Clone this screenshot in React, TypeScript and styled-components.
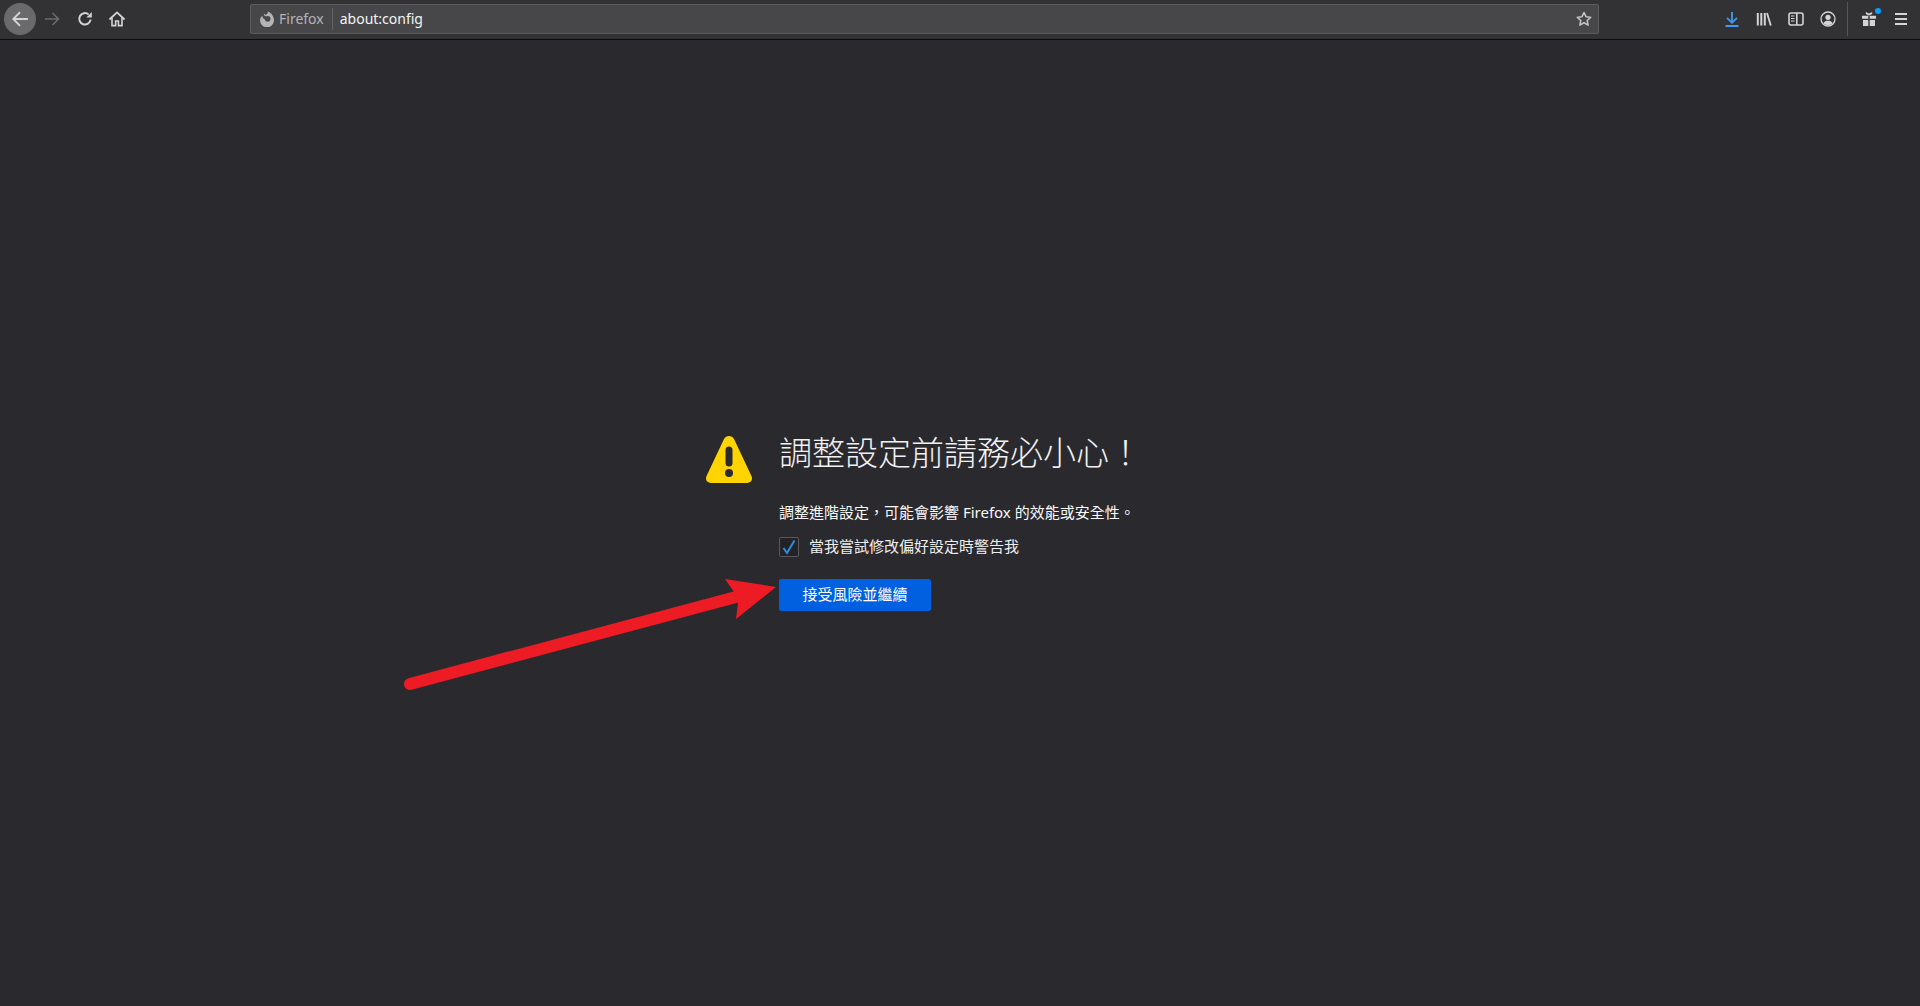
import styled, { createGlobalStyle } from "styled-components";

const GlobalStyle = createGlobalStyle`
  html, body {
    margin: 0;
    height: 100%;
    overflow: hidden;
    background: #2a2a2e;
  }
  #root {
    height: 100%;
  }
`;

// Styled
const Page = styled.div`
  position: relative;
  display: flex;
  flex-direction: column;
  height: 1006px;
  background: #2a2a2e;
  color: #f9f9fa;
  font-family: "Noto Sans", "Noto Sans CJK TC", sans-serif;
`;

const Toolbar = styled.header`
  display: flex;
  align-items: center;
  flex: none;
  box-sizing: border-box;
  height: 40px;
  padding-bottom: 1px;
  background: #323234;
  border-bottom: 1px solid #0c0c0d;
`;

const NavGroup = styled.nav`
  display: flex;
  align-items: center;
  flex: none;
  box-sizing: border-box;
  width: 250px;
  padding-left: 4px;
`;

const ToolButton = styled.button<{ $active?: boolean; $dim?: boolean; $shift?: number }>`
  display: flex;
  align-items: center;
  justify-content: center;
  flex: none;
  width: 32px;
  height: 32px;
  margin-left: ${(p) => p.$shift ?? 0}px;
  padding: 0;
  border: 0;
  border-radius: 50%;
  background: ${(p) => (p.$active ? "#6a6a6c" : "transparent")};
  color: ${(p) => (p.$dim ? "#6b6b6d" : "#d4d4d5")};
`;

const UrlBar = styled.div`
  display: flex;
  align-items: center;
  flex: 1;
  box-sizing: border-box;
  height: 30px;
  padding: 0 6px 0 8px;
  background: #474749;
  border: 1px solid #5c5c5e;
  border-radius: 2px;
  font-size: 14px;
  line-height: 18px;
`;

const Identity = styled.span`
  display: flex;
  align-items: center;
  gap: 4px;
  height: 22px;
  padding-right: 8px;
  border-right: 1px solid #636366;
  color: #b4b4b5;
`;

const UrlText = styled.span`
  flex: 1;
  padding-bottom: 1px;
  padding-left: 7px;
  color: #f4f4f5;
`;

const ActionGroup = styled.div`
  display: flex;
  align-items: center;
  justify-content: flex-end;
  flex: none;
  box-sizing: border-box;
  width: 321px;
  padding-right: 3px;
`;

const Separator = styled.span`
  flex: none;
  width: 1px;
  height: 34px;
  margin: 0 5px 0 3px;
  background: #555557;
`;

const BadgeWrap = styled.span`
  position: relative;
  display: flex;
`;

const Badge = styled.span`
  position: absolute;
  top: -3px;
  right: -4px;
  width: 6px;
  height: 6px;
  border-radius: 50%;
  background: #0a9dff;
`;

const Main = styled.main`
  display: flex;
  flex: 1;
  align-items: center;
  justify-content: center;
`;

const Notice = styled.section`
  display: flex;
  gap: 27px;
  width: 508px;
`;

const WarningIcon = styled.svg`
  flex: none;
  width: 46px;
  height: 47px;
`;

const NoticeBody = styled.div`
  flex: 1;
`;

const Title = styled.h1`
  margin: 0 0 32px;
  font-size: 33px;
  font-weight: 300;
  line-height: 34px;
  white-space: nowrap;
  color: #f1f1f2;
`;

const Message = styled.p`
  margin: 0 0 15px;
  font-size: 15px;
  line-height: 20px;
  white-space: nowrap;
`;

const CheckRow = styled.label`
  display: flex;
  align-items: center;
  gap: 10px;
  font-size: 15px;
  line-height: 20px;
  color: #eeeeef;
`;

const CheckText = styled.span`
  height: 20px;
  margin-top: -2px;
`;

const CheckBox = styled.span`
  display: flex;
  align-items: center;
  justify-content: center;
  box-sizing: border-box;
  width: 20px;
  height: 20px;
  background: #232327;
  border: 1px solid #5a5a5e;
  border-radius: 2px;
  color: #2b90d9;
`;

const AcceptButton = styled.button`
  display: block;
  width: 152px;
  height: 32px;
  margin-top: 22px;
  padding: 0 0 2px;
  border: 0;
  border-radius: 2px;
  background: #0060df;
  color: #ffffff;
  font: inherit;
  font-size: 15px;
`;

const Annotation = styled.svg`
  position: absolute;
  top: 570px;
  left: 400px;
  width: 390px;
  height: 125px;
  pointer-events: none;
`;

// Icons
const Glyph = styled.svg`
  display: block;
  width: 16px;
  height: 16px;
  fill: none;
  stroke: currentColor;
  stroke-width: 1.6;
`;

const BackIcon = () => (
  <Glyph viewBox="0 0 16 16" style={{ width: 18, height: 18 }}>
    <path d="M15 8H2M8 2 2 8l6 6" />
  </Glyph>
);

const ForwardIcon = () => (
  <Glyph viewBox="0 0 16 16">
    <path d="M1 8h13M8.5 2 14.5 8l-6 6" />
  </Glyph>
);

const ReloadIcon = () => (
  <Glyph viewBox="0 0 16 16">
    <path d="M13.6 8.6A5.7 5.7 0 1 1 11.6 3.4" strokeWidth="2" />
    <path d="M14.8 1v5.4H9.4z" fill="currentColor" stroke="none" />
  </Glyph>
);

const HomeIcon = () => (
  <Glyph viewBox="0 0 16 16">
    <path d="M1 8 8 1.4 15 8" strokeLinecap="round" strokeWidth="1.8" />
    <path d="M3 7v7.6h3.6V10h2.8v4.6H13V7" />
  </Glyph>
);

const FirefoxIcon = () => (
  <svg viewBox="0 0 16 16" width="16" height="16" aria-hidden="true">
    <path
      fill="#b4b4b5"
      d="M8.800.4c.3 1.800-.6 2.900-2 3.500-.6-.5-1.300-.8-2-.9.2.5.3 1 .3 1.500.9.300 1.500.6 2 1.100.4-.4 1-.6 1.700-.6a2.900 2.900 0 1 1-3 3.500C4.300 7.700 3.500 6.400 3.300 4.800 1.900 5.900 1 7.500 1 9.200a7 7 0 0 0 14 0C15 5.300 12.500 1.700 8.800.4z"
    />
  </svg>
);

const StarIcon = () => (
  <Glyph viewBox="0 0 16 16" style={{ color: "#c2c2c3" }}>
    <path d="M8 1.500 10 5.700l4.600.6-3.400 3.200.9 4.600L8 11.800l-4.100 2.300.9-4.600L1.400 6.300 6 5.700z" strokeLinejoin="round" />
  </Glyph>
);

const DownloadIcon = () => (
  <Glyph viewBox="0 0 16 16" style={{ color: "#3f9bf5" }}>
    <path d="M8 1v10.500M3 6.800l5 5 5-5M1.500 15h13" strokeWidth="1.800" />
  </Glyph>
);

const LibraryIcon = () => (
  <Glyph viewBox="0 0 16 16">
    <path d="M1.800 2v12.500M5.300 2v12.500M8.800 2v12.500" strokeWidth="2" />
    <path d="M11 2l3.800 12.500" strokeWidth="1.800" />
  </Glyph>
);

const SidebarIcon = () => (
  <Glyph viewBox="0 0 16 16">
    <rect x="1" y="2" width="14" height="12" rx="2" />
    <path d="M8.800 2v12" />
    <path d="M3 5h3.500M3 7.500h3.500M3 10h3.500" strokeWidth="1.200" />
  </Glyph>
);

const AccountIcon = () => (
  <Glyph viewBox="0 0 16 16" style={{ strokeWidth: 1.3 }}>
    <circle cx="8" cy="8" r="7" />
    <circle cx="8" cy="6.300" r="2.600" fill="currentColor" stroke="none" />
    <path d="M3.400 12.300c1-1.900 2.600-2.500 4.600-2.500s3.600.6 4.600 2.500C11.500 13.500 9.800 14.200 8 14.200s-3.500-.7-4.600-1.900z" fill="currentColor" stroke="none" />
  </Glyph>
);

const GiftIcon = () => (
  <Glyph viewBox="0 0 16 16" style={{ stroke: "none", fill: "currentColor" }}>
    <path d="M1 4.800h6.300v3H1zM8.700 4.800H15v3H8.700zM2 9h5.300v6H2zM8.700 9H14v6H8.700z" />
    <path d="M8 4.500 4.800 3V1l3.200 1.400L11.200 1v2z" />
  </Glyph>
);

const MenuIcon = () => (
  <Glyph viewBox="0 0 16 16" style={{ strokeWidth: 2 }}>
    <path d="M2 3h12M2 8h12M2 13h12" />
  </Glyph>
);

const App = () => {
  return (
    <Page lang="zh-TW">
      <GlobalStyle />
      <Toolbar>
        <NavGroup>
          <ToolButton $active>
            <BackIcon />
          </ToolButton>
          <ToolButton $dim>
            <ForwardIcon />
          </ToolButton>
          <ToolButton $shift={1}>
            <ReloadIcon />
          </ToolButton>
          <ToolButton>
            <HomeIcon />
          </ToolButton>
        </NavGroup>
        <UrlBar>
          <Identity>
            <FirefoxIcon />
            Firefox
          </Identity>
          <UrlText>about:config</UrlText>
          <StarIcon />
        </UrlBar>
        <ActionGroup>
          <ToolButton>
            <DownloadIcon />
          </ToolButton>
          <ToolButton>
            <LibraryIcon />
          </ToolButton>
          <ToolButton>
            <SidebarIcon />
          </ToolButton>
          <ToolButton>
            <AccountIcon />
          </ToolButton>
          <Separator />
          <ToolButton>
            <BadgeWrap>
              <GiftIcon />
              <Badge />
            </BadgeWrap>
          </ToolButton>
          <ToolButton>
            <MenuIcon />
          </ToolButton>
        </ActionGroup>
      </Toolbar>

      <Main>
        <Notice>
          <WarningIcon viewBox="0 0 46 47" aria-hidden="true">
            <path
              fill="#ffd400"
              d="M23 0c-2.200 0-3.900 1.100-5 3.100L.8 39.600C-1.300 43.500.9 47 5 47h36c4.100 0 6.300-3.500 4.200-7.400L28 3.100C26.900 1.100 25.200 0 23 0z"
            />
            <rect x="19.500" y="10.500" width="7" height="20" rx="3.500" fill="#2a2a2e" />
            <circle cx="23" cy="37" r="4" fill="#2a2a2e" />
          </WarningIcon>
          <NoticeBody>
            <Title>調整設定前請務必小心！</Title>
            <Message>調整進階設定，可能會影響 Firefox 的效能或安全性。</Message>
            <CheckRow>
              <CheckBox>
                <svg viewBox="0 0 16 16" width="16" height="16" aria-hidden="true">
                  <path d="M2.500 9 6 14 13.500 1.500" fill="none" stroke="currentColor" strokeWidth="2" />
                </svg>
              </CheckBox>
              <CheckText>當我嘗試修改偏好設定時警告我</CheckText>
            </CheckRow>
            <AcceptButton>接受風險並繼續</AcceptButton>
          </NoticeBody>
        </Notice>
      </Main>

      <Annotation viewBox="400 570 390 125" aria-hidden="true">
        <path d="M410 684 736 597" stroke="#ed1c24" strokeWidth="12" strokeLinecap="round" fill="none" />
        <path d="M776 587 725 579 734 592 738 603 736 619z" fill="#ed1c24" />
      </Annotation>
    </Page>
  );
};

export default App;
